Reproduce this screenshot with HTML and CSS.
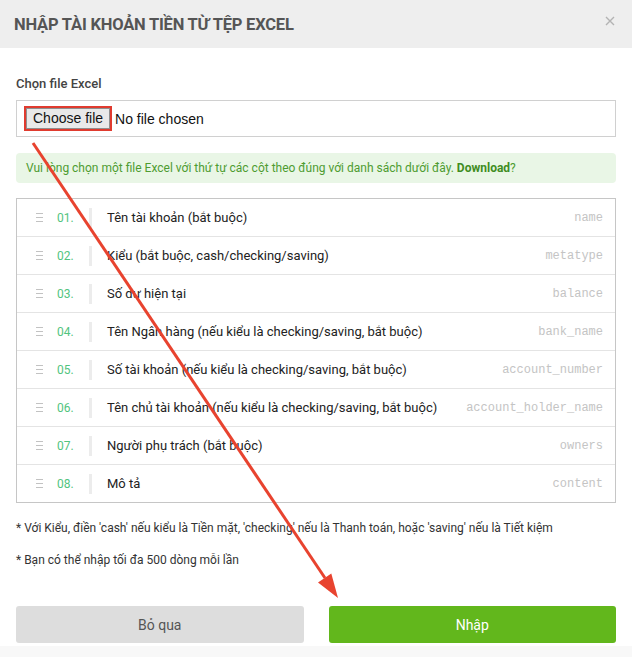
FILE: index.html
```html
<!DOCTYPE html>
<html lang="vi">
<head>
    <meta charset="UTF-8">
    <title>Nhập tài khoản tiền từ tệp Excel</title>
    <link rel="stylesheet" href="styles.css">
</head>
<body>
<div class="modal">
    <div class="modal-header">
        <h3 class="modal-title">NHẬP TÀI KHOẢN TIỀN TỪ TỆP EXCEL</h3>
        <span class="close">
            <svg width="10" height="10" viewBox="0 0 10 10"><path d="M1 1L9 9M9 1L1 9" stroke="#b3b3b3" stroke-width="1.4"/></svg>
        </span>
    </div>
    <div class="modal-body">
        <label class="field-label">Chọn file Excel</label>
        <div class="file-box">
            <span class="file-btn">Choose file</span>
            <span class="file-name">No file chosen</span>
        </div>
        <div class="notice">
            Vui lòng chọn một file Excel với thứ tự các cột theo đúng với danh sách dưới đây. <a href="#">Download</a>?
        </div>
        <ul class="columns">
            <li class="col-row"><span class="handle"></span><span class="num">01.</span><span class="sep"></span><span class="title">Tên tài khoản (bắt buộc)</span><code class="key">name</code></li>
            <li class="col-row"><span class="handle"></span><span class="num">02.</span><span class="sep"></span><span class="title">Kiểu (bắt buộc, cash/checking/saving)</span><code class="key">metatype</code></li>
            <li class="col-row"><span class="handle"></span><span class="num">03.</span><span class="sep"></span><span class="title">Số dư hiện tại</span><code class="key">balance</code></li>
            <li class="col-row"><span class="handle"></span><span class="num">04.</span><span class="sep"></span><span class="title">Tên Ngân hàng (nếu kiểu là checking/saving, bắt buộc)</span><code class="key">bank_name</code></li>
            <li class="col-row"><span class="handle"></span><span class="num">05.</span><span class="sep"></span><span class="title">Số tài khoản (nếu kiểu là checking/saving, bắt buộc)</span><code class="key">account_number</code></li>
            <li class="col-row"><span class="handle"></span><span class="num">06.</span><span class="sep"></span><span class="title">Tên chủ tài khoản (nếu kiểu là checking/saving, bắt buộc)</span><code class="key">account_holder_name</code></li>
            <li class="col-row"><span class="handle"></span><span class="num">07.</span><span class="sep"></span><span class="title">Người phụ trách (bắt buộc)</span><code class="key">owners</code></li>
            <li class="col-row"><span class="handle"></span><span class="num">08.</span><span class="sep"></span><span class="title">Mô tả</span><code class="key">content</code></li>
        </ul>
        <p class="hint">* Với Kiểu, điền 'cash' nếu kiểu là Tiền mặt, 'checking' nếu là Thanh toán, hoặc 'saving' nếu là Tiết kiệm</p>
        <p class="hint">* Bạn có thể nhập tối đa 500 dòng mỗi lần</p>
    </div>
    <div class="modal-footer">
        <button class="btn btn-cancel">Bỏ qua</button>
        <button class="btn btn-primary">Nhập</button>
    </div>
</div>
<svg class="annotation" width="632" height="657" viewBox="0 0 632 657">
    <line x1="33" y1="143" x2="325" y2="578" stroke="#e8432f" stroke-width="3"/>
    <polygon points="338,598 318,582.5 331.3,573.6" fill="#e8432f"/>
</svg>
</body>
</html>
```
FILE: styles.css
```css
html,
body {
    margin: 0;
    padding: 0;
    background: #f8f8f8;
}

body {
    font-family: Roboto, "Noto Sans", sans-serif;
    color: #333;
    position: relative;
    width: 632px;
    height: 657px;
    overflow: hidden;
}

.modal {
    background: #fff;
    height: 646px;
    display: flex;
    flex-direction: column;
}

.modal-header {
    height: 48px;
    background: #eeeeee;
    display: flex;
    align-items: center;
    justify-content: space-between;
    padding: 0 17px 0 14px;
}
.modal-title {
    margin: 0;
    font-size: 16.5px;
    font-weight: 700;
    color: #555;
    letter-spacing: -0.2px;
}
.close {
    display: flex;
    margin-top: -6px;
}

.modal-body {
    padding: 28px 16px 0;
}

.field-label {
    display: block;
    font-size: 13px;
    font-weight: 500;
    line-height: 16px;
    color: #444;
    margin-bottom: 8px;
}

.file-box {
    height: 35px;
    border: 1px solid #d0d0d0;
    display: flex;
    align-items: center;
    padding: 0 9px;
    font-family: "Liberation Sans", Arial, sans-serif;
}
.file-btn {
    font-size: 14px;
    line-height: 19px;
    padding: 0 6px;
    background: #e9e9e9;
    border: 1px solid #8f8f8f;
    color: #111;
    outline: 2px solid #e03b2f;
}
.file-name {
    font-size: 14px;
    color: #111;
    margin-left: 5px;
}

.notice {
    margin-top: 16px;
    background: #e9f6e6;
    border-radius: 4px;
    padding: 7px 10px;
    font-size: 12px;
    line-height: 16px;
    color: #4e9c31;
}
.notice a {
    color: #3f8d1f;
    font-weight: 700;
    text-decoration: none;
}

.columns {
    list-style: none;
    margin: 15px 0 0;
    padding: 0;
    border: 1px solid #c6c6c6;
}
.col-row {
    height: 37px;
    display: flex;
    align-items: center;
    padding: 0 12px 0 19px;
    border-bottom: 1px solid #e4e4e4;
}
.col-row:last-child {
    border-bottom: 0;
}
.handle {
    width: 7px;
    height: 7px;
    border-top: 1px solid #c2c2c2;
    border-bottom: 1px solid #c2c2c2;
    background: linear-gradient(#c2c2c2, #c2c2c2) center / 100% 1px no-repeat;
}
.num {
    width: 32px;
    margin-left: 14px;
    font-size: 12px;
    color: #52c47e;
}
.sep {
    width: 3px;
    height: 20px;
    background: #ececec;
}
.title {
    flex: 1;
    margin-left: 15px;
    font-size: 13px;
    color: #222;
}
.key {
    font-family: "Liberation Mono", "DejaVu Sans Mono", monospace;
    font-size: 12px;
    color: #c4c4c4;
}

.hint {
    margin: 17px 0 0;
    font-size: 12px;
    line-height: 16px;
    color: #333;
}
.hint + .hint {
    margin-top: 16px;
}

.modal-footer {
    margin-top: auto;
    display: flex;
    gap: 25px;
    padding: 0 16px 3px;
}
.btn {
    flex: 1;
    height: 37px;
    border: 0;
    border-radius: 3px;
    font-family: Roboto, "Noto Sans", sans-serif;
    font-size: 14px;
}
.btn-cancel {
    background: #dddddd;
    color: #555;
}
.btn-primary {
    background: #62b71c;
    color: #fff;
}

.annotation {
    position: absolute;
    left: 0;
    top: 0;
    pointer-events: none;
}
```
